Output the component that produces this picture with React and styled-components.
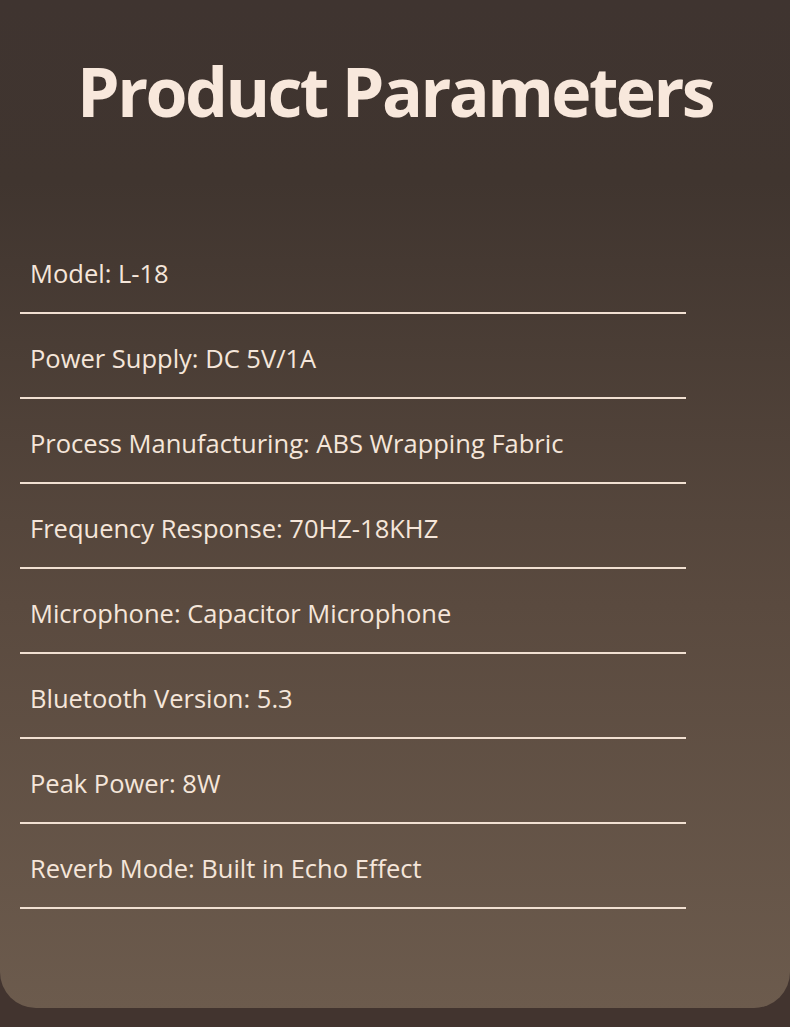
import React from 'react';
import styled, { createGlobalStyle } from 'styled-components';

const GlobalStyle = createGlobalStyle`
    html, body {
        margin: 0;
        padding: 0;
        background: #42342f;
    }
`;

const Page = styled.div`
    width: 790px;
    height: 1027px;
    background: #42342f;
    overflow: hidden;
`;

const Panel = styled.div`
    height: 1008px;
    border-radius: 0 0 36px 36px;
    background: linear-gradient(180deg, #3f3430 0%, #40352f 18%, #5a4a3f 60%, #6c5b4d 100%);
    box-sizing: border-box;
    padding-top: 41px;
`;

const Title = styled.h1`
    margin: 0;
    text-align: center;
    font-family: "Open Sans", "Noto Sans", sans-serif;
    font-weight: 700;
    font-size: 68px;
    line-height: 100px;
    color: #f8e8dc;
    letter-spacing: -2.6px;
`;

const ParamList = styled.ul`
    list-style: none;
    margin: 88px 0 0 20px;
    padding: 0;
    width: 666px;
`;

const ParamRow = styled.li`
    height: 85px;
    box-sizing: border-box;
    border-bottom: 2px solid #f1e0d2;
    padding: 27px 0 0 10px;
    font-family: "Open Sans", "Noto Sans", sans-serif;
    font-size: 25.5px;
    font-weight: 500;
    line-height: 34px;
    color: #f5e6da;
`;

const params = [
    'Model: L-18',
    'Power Supply: DC 5V/1A',
    'Process Manufacturing: ABS Wrapping Fabric',
    'Frequency Response: 70HZ-18KHZ',
    'Microphone: Capacitor Microphone',
    'Bluetooth Version: 5.3',
    'Peak Power: 8W',
    'Reverb Mode: Built in Echo Effect',
];

const App = () => (
    <Page>
        <GlobalStyle />
        <Panel>
            <Title>Product Parameters</Title>
            <ParamList>
                {params.map((text) => (
                    <ParamRow key={text}>{text}</ParamRow>
                ))}
            </ParamList>
        </Panel>
    </Page>
);

export default App;
